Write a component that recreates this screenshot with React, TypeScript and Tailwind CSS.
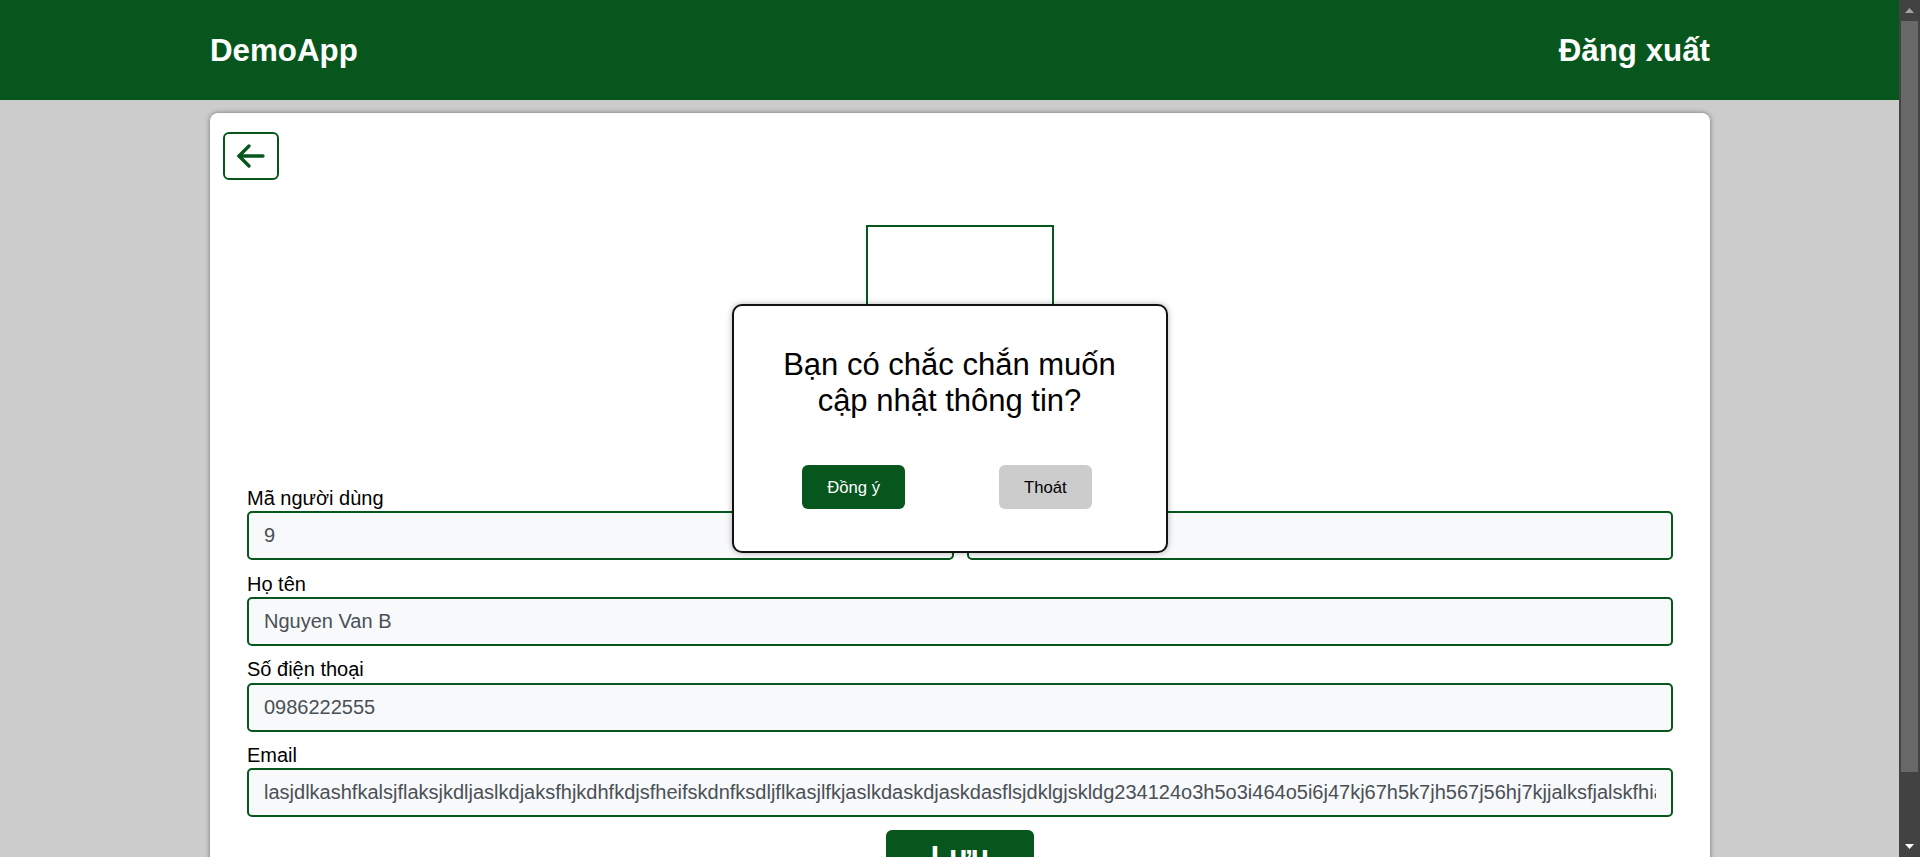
const GREEN = "#06561d";

const email =
  "lasjdlkashfkalsjflaksjkdljaslkdjaksfhjkdhfkdjsfheifskdnfksdljflkasjlfkjaslkdaskdjaskdasflsjdklgjskldg234124o3h5o3i464o5i6j47kj67h5k7jh567j56hj7kjjalksfjalskfhiaslkdjfalksjdflkajsdlkfj";

const BackArrow = () => (
  <svg width="28" height="24" viewBox="0 0 28 24" fill="none" stroke={GREEN} strokeWidth="3.3" strokeLinecap="round" strokeLinejoin="round">
    <path d="M12 2 L2 12 L12 22" />
    <path d="M2 12 H26" />
  </svg>
);

const Field = ({ label, value, first }: { label: string; value: string; first?: boolean }) => (
  <div className={first ? "" : "mt-[12.5px]"}>
    <label className="block text-[20px] leading-[23px] text-black">{label}</label>
    <input
      readOnly
      value={value}
      className="mt-[1.2px] block h-[49px] w-full rounded-[5px] border-2 border-[#06561d] bg-[#f8f9fa] px-[15px] text-[20px] text-[#495057] outline-none"
    />
  </div>
);

const Scrollbar = () => (
  <div className="flex h-full w-[21px] shrink-0 flex-col items-center bg-[#424242]">
    <div className="flex h-[21px] items-center justify-center">
      <svg width="9" height="5" viewBox="0 0 9 5">
        <polygon points="4.5,0 9,5 0,5" fill="#a3a3a3" />
      </svg>
    </div>
    <div className="h-[751px] w-[17px] bg-[#686868]" />
    <div className="flex-1" />
    <div className="flex h-[21px] items-center justify-center">
      <svg width="9" height="5" viewBox="0 0 9 5">
        <polygon points="0,0 9,0 4.5,5" fill="#ffffff" />
      </svg>
    </div>
  </div>
);

export default function App() {
  return (
    <div className="flex h-screen w-full overflow-hidden font-['Liberation_Sans',Arial,sans-serif]">
      <div className="relative min-w-0 flex-1 overflow-hidden bg-[#cccccc]">
        <header className="h-[100px] bg-[#06561d] pt-[2px]">
          <div className="ml-[210px] flex h-full w-[1500px] items-center justify-between">
            <span className="text-[31.3px] font-bold text-white">DemoApp</span>
            <span className="text-[31.3px] font-bold text-white">Đăng xuất</span>
          </div>
        </header>

        <div className="ml-[210px] mt-[13px] w-[1500px] rounded-[8px] bg-white px-[13px] pb-[40px] pt-[19px] shadow-[0_0_5px_rgba(0,0,0,0.45)]">
          <button className="flex h-[48px] w-[56px] items-center justify-center rounded-[6px] border-2 border-[#06561d] bg-white">
            <BackArrow />
          </button>

          <div className="mx-auto mt-[45px] h-[188px] w-[188px] border-2 border-[#06561d]" />

          <div className="mt-[74px] px-[24px]">
            <div className="grid grid-cols-2 gap-x-[13px]">
              <Field first label="Mã người dùng" value="9" />
              <Field first label={"\u00a0"} value="" />
            </div>
            <Field label="Họ tên" value="Nguyen Van B" />
            <Field label="Số điện thoại" value="0986222555" />
            <Field label="Email" value={email} />
            <div className="mt-[13px] flex justify-center">
              <button className="w-[148px] rounded-[6px] bg-[#06561d] py-[8px] text-[30px] font-bold leading-[36px] text-white">
                Lưu
              </button>
            </div>
          </div>
        </div>

        <div className="absolute inset-0 flex items-center justify-center">
          <div className="flex h-[249px] w-[436px] flex-col items-center rounded-[10px] border-2 border-[#111111] bg-white pt-[41px] shadow-[0_0_6px_rgba(0,0,0,0.3)]">
            <h2 className="text-center text-[31px] leading-[36px] text-black">
              Bạn có chắc chắn muốn
              <br />
              cập nhật thông tin?
            </h2>
            <div className="mt-[46px] flex justify-center gap-[94px] pr-[5px]">
              <button className="h-[44px] rounded-[6px] bg-[#06561d] px-[25px] text-[16.67px] text-white">Đồng ý</button>
              <button className="h-[44px] rounded-[6px] bg-[#cccccc] px-[25px] text-[16.67px] text-black">Thoát</button>
            </div>
          </div>
        </div>
      </div>
      <Scrollbar />
    </div>
  );
}
